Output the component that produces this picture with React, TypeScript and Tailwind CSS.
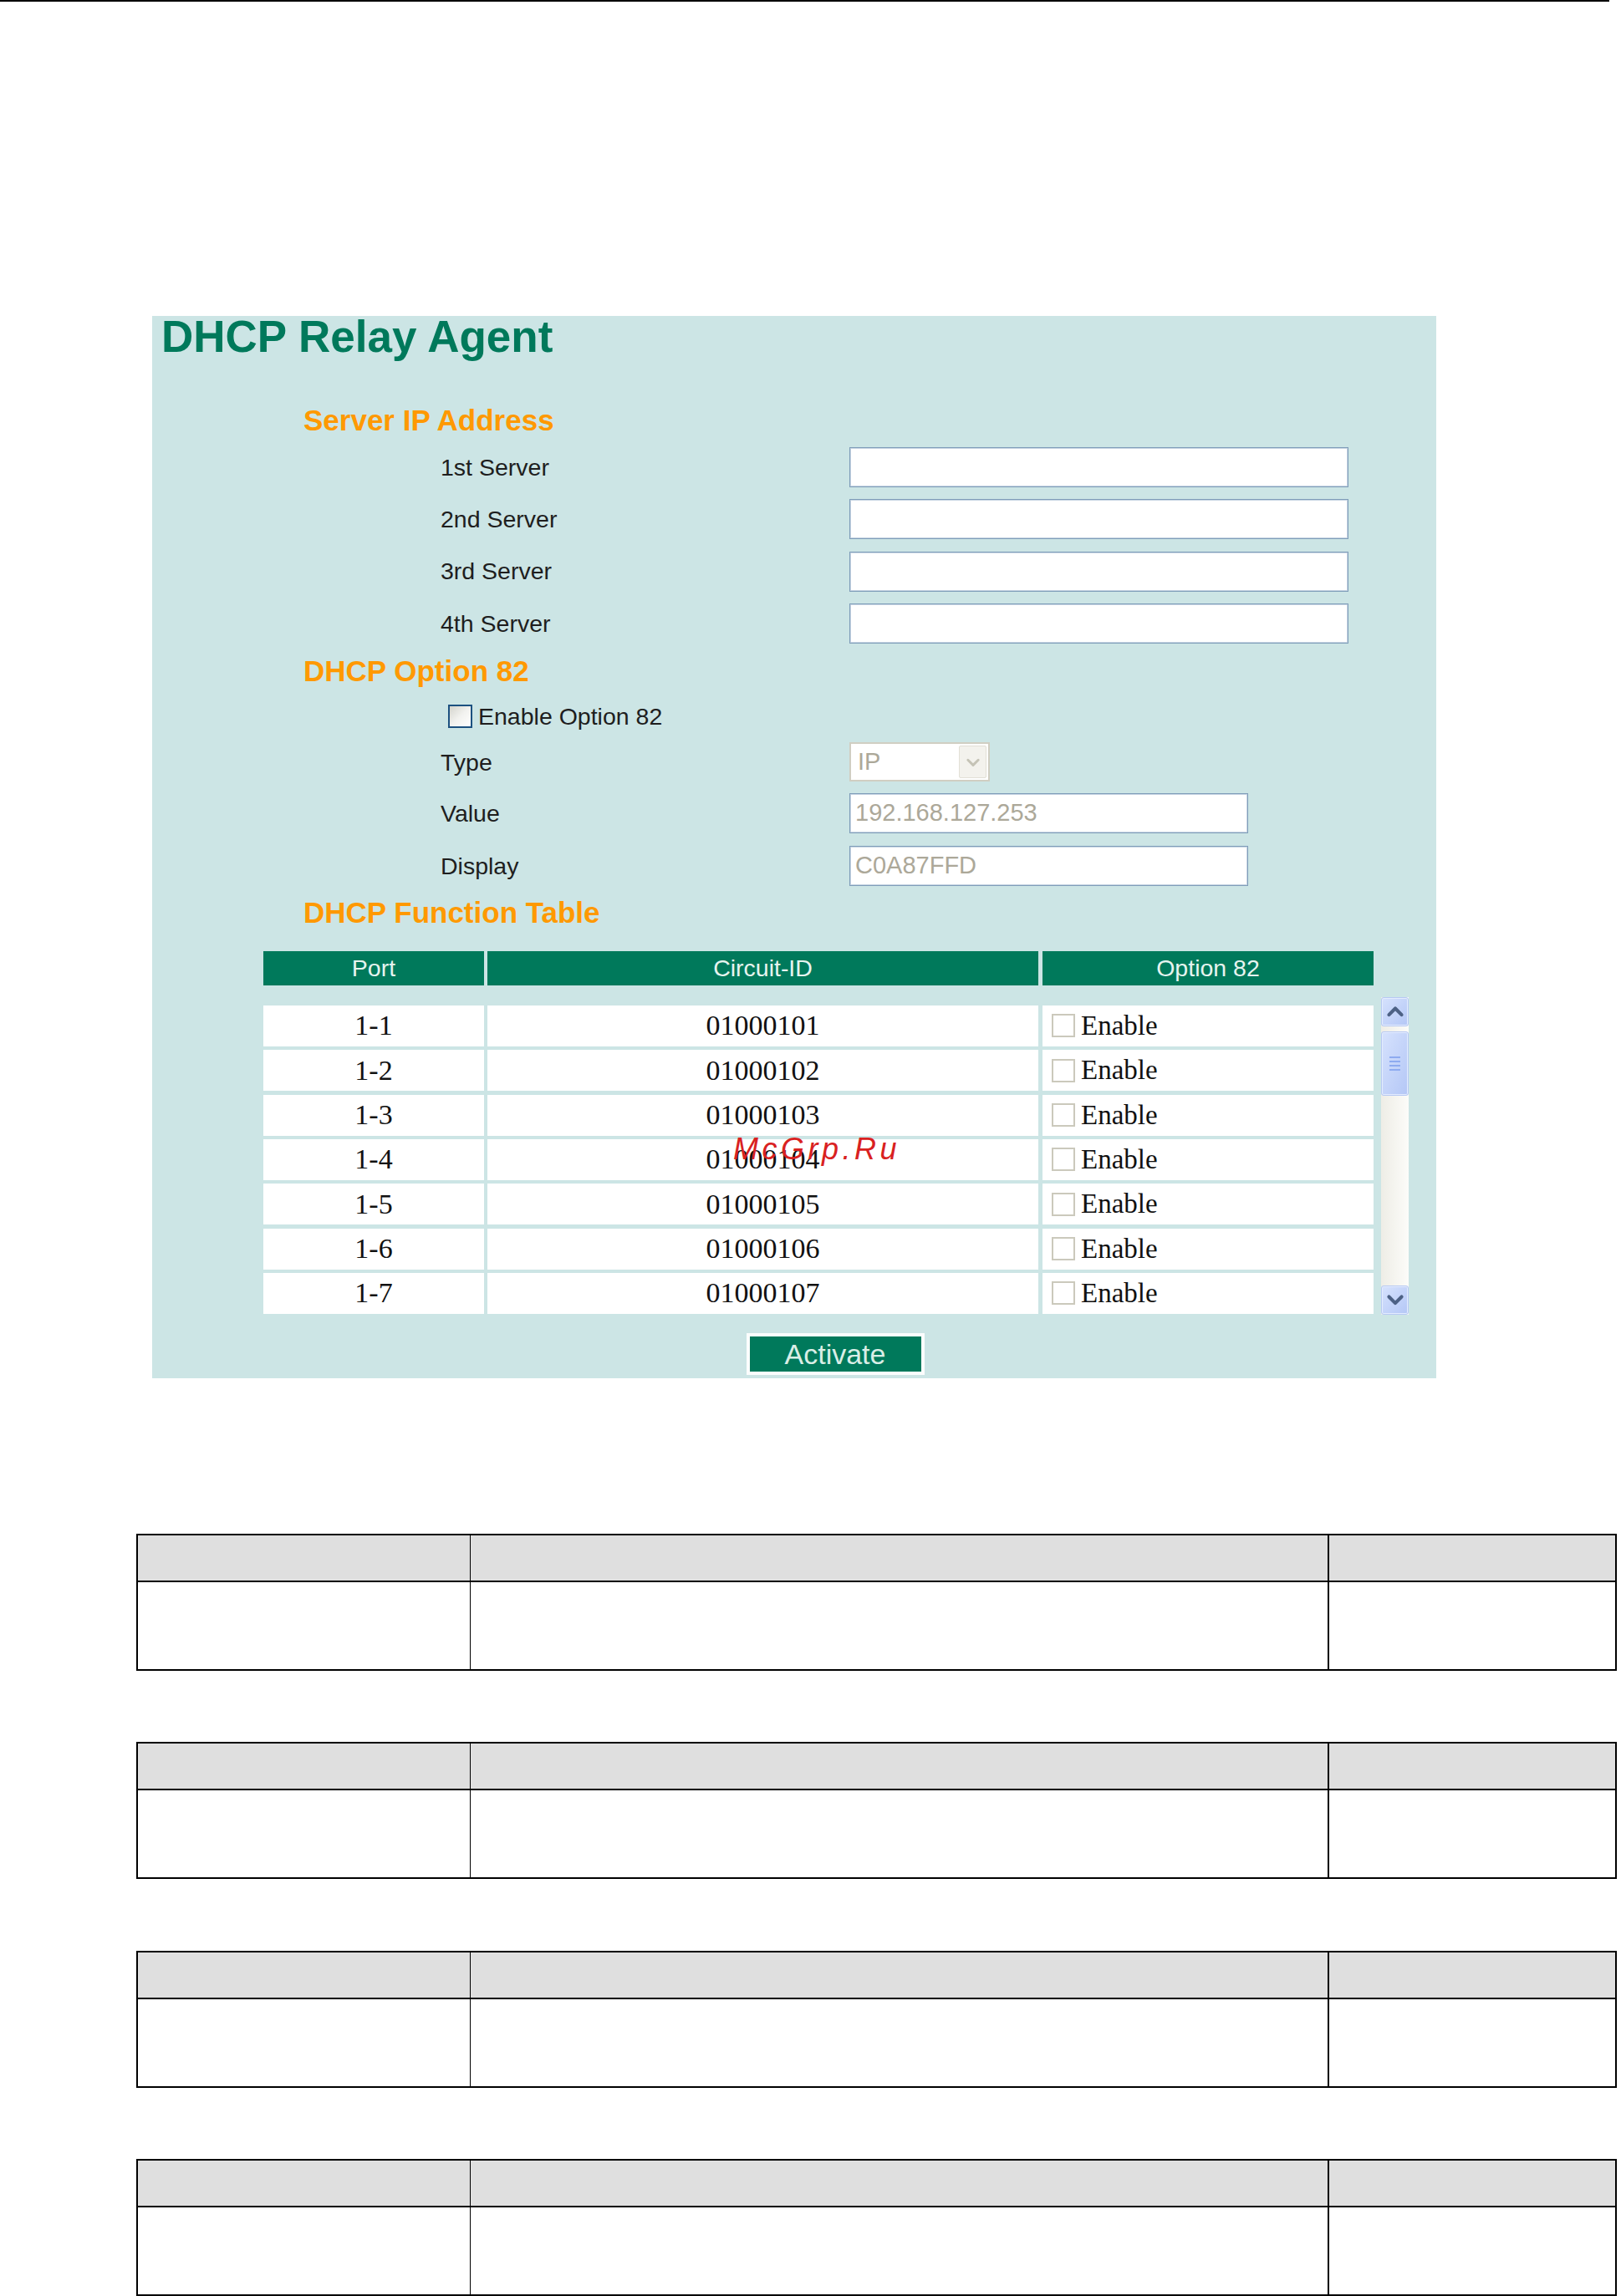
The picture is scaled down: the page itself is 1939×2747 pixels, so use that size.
import React from "react";

const SANS = "font-['Liberation_Sans',Arial,sans-serif]";
const SERIF = "font-['Liberation_Serif','Times_New_Roman',serif]";

function Heading({ children, mt }: { children: React.ReactNode; mt: string }) {
  return (
    <div className={`${mt} flex h-[40px] items-center pl-[181px] text-[35px] font-bold leading-none text-[#ff9900]`}>
      {children}
    </div>
  );
}

function Field({ label, mt, children }: { label: string; mt: string; children: React.ReactNode }) {
  return (
    <div className={`${mt} flex h-[48px] items-center pl-[345px]`}>
      <div className="w-[489px] text-[28.5px] leading-none text-[#1e1e1e]">{label}</div>
      {children}
    </div>
  );
}

function TextBox({ w, value }: { w: string; value?: string }) {
  return (
    <div
      className={`${w} flex h-[48px] items-center border border-[#7f9db9] bg-white pl-[6px] text-[29px] leading-none text-[#aca899] shadow-[inset_0_0_0_1px_#c6d4e2]`}
    >
      {value}
    </div>
  );
}

function Chevron({ up, color, size, sw }: { up?: boolean; color: string; size: number; sw: number }) {
  return (
    <svg width={size} height={size} viewBox="0 0 16 16" fill="none">
      <path
        d={up ? "M2.5 11 L8 5.5 L13.5 11" : "M2.5 5.5 L8 11 L13.5 5.5"}
        stroke={color}
        strokeWidth={sw}
        strokeLinecap="round"
        strokeLinejoin="round"
      />
    </svg>
  );
}

function ScrollBtn({ up }: { up?: boolean }) {
  return (
    <div className="flex h-[35px] w-[33px] items-center justify-center rounded-[3px] border border-[#b7c9f3] bg-linear-to-br from-[#d6e2fd] to-[#b4c7f6] shadow-[inset_0_0_0_1px_#e4ecfe]">
      <Chevron up={up} color="#4d6185" size={22} sw={3} />
    </div>
  );
}

const circuit = ["01000101", "01000102", "01000103", "01000104", "01000105", "01000106", "01000107"];

function InfoTable({ mt }: { mt: string }) {
  return (
    <div className={`${mt} flex w-[1771px] border-2 border-black`}>
      <div className="w-[398px] border-r border-black">
        <div className="h-[56px] border-b-2 border-black bg-[#dfdfdf]" />
        <div className="h-[104px] bg-white" />
      </div>
      <div className="w-[1027px] border-r-2 border-black">
        <div className="h-[56px] border-b-2 border-black bg-[#dfdfdf]" />
        <div className="h-[104px] bg-white" />
      </div>
      <div className="flex-1">
        <div className="h-[56px] border-b-2 border-black bg-[#dfdfdf]" />
        <div className="h-[104px] bg-white" />
      </div>
    </div>
  );
}

export default function App() {
  return (
    <div className={`${SANS} relative h-[2747px] w-[1939px] overflow-hidden bg-white`}>
      <div className="h-[2px] w-[1925px] bg-black" />

      <div className="ml-[182px] mt-[376px] flex h-[1271px] w-[1536px] flex-col bg-[#cce5e5]">
        <div className="flex h-[48px] items-center pl-[11px] text-[53px] font-bold leading-none text-[#00795b]">
          DHCP Relay Agent
        </div>

        <Heading mt="mt-[56px]">Server IP Address</Heading>

        <Field label="1st Server" mt="mt-[13px]">
          <TextBox w="w-[597px]" />
        </Field>
        <Field label="2nd Server" mt="mt-[14.33px]">
          <TextBox w="w-[597px]" />
        </Field>
        <Field label="3rd Server" mt="mt-[14.33px]">
          <TextBox w="w-[597px]" />
        </Field>
        <Field label="4th Server" mt="mt-[14.33px]">
          <TextBox w="w-[597px]" />
        </Field>

        <Heading mt="mt-[12.5px]">DHCP Option 82</Heading>

        <div className="mt-[20.5px] flex h-[28px] items-center pl-[354px]">
          <div className="h-[28px] w-[29px] border-2 border-[#1c5180] bg-linear-to-br from-[#d4d4cd] via-[#f2f2ef] to-white" />
          <div className="ml-[7px] text-[28.5px] leading-none text-[#1e1e1e]">Enable Option 82</div>
        </div>

        <Field label="Type" mt="mt-[17px]">
          <div className="flex h-[47px] w-[168px] items-stretch border-2 border-[#d0cec2] bg-white p-[2px]">
            <div className="flex flex-1 items-center pl-[6px] text-[29px] leading-none text-[#aca899]">IP</div>
            <div className="flex w-[33px] items-center justify-center rounded-[2px] border border-[#e2e0d6] bg-[#f3f2ed]">
              <Chevron color="#c5c3b6" size={18} sw={2.6} />
            </div>
          </div>
        </Field>
        <Field label="Value" mt="mt-[13px]">
          <TextBox w="w-[477px]" value="192.168.127.253" />
        </Field>
        <Field label="Display" mt="mt-[15px]">
          <TextBox w="w-[477px]" value="C0A87FFD" />
        </Field>

        <Heading mt="mt-[11.5px]">DHCP Function Table</Heading>

        <div className="ml-[133px] mt-[26.5px] flex h-[41px] text-[28.5px] leading-none text-[#e6f4ef]">
          <div className="flex w-[264px] items-center justify-center bg-[#00795b]">Port</div>
          <div className="ml-[4px] flex w-[659px] items-center justify-center bg-[#00795b]">Circuit-ID</div>
          <div className="ml-[5px] flex w-[396px] items-center justify-center bg-[#00795b]">Option 82</div>
        </div>

        <div className="ml-[133px] mt-[14px] flex h-[380px]">
          <div className="flex w-[1328px] flex-col gap-[4.33px] pt-[10px]">
            {circuit.map((c, i) => (
              <div key={c} className={`${SERIF} flex h-[49px] text-[34px] leading-none text-[#111]`}>
                <div className="flex w-[264px] items-center justify-center bg-white">1-{i + 1}</div>
                <div className="ml-[4px] flex w-[659px] items-center justify-center bg-white">{c}</div>
                <div className="ml-[5px] flex w-[396px] items-center bg-white pl-[11px]">
                  <div className="h-[28px] w-[28px] border-2 border-[#cbc9bc] bg-white" />
                  <div className="ml-[7px] text-[33px]">Enable</div>
                </div>
              </div>
            ))}
          </div>
          <div className="ml-[9px] flex h-[380px] w-[33px] flex-col bg-linear-to-r from-[#eeede6] to-[#fcfcf9]">
            <ScrollBtn up />
            <div className="mt-[6px] flex h-[77px] w-[33px] flex-col items-center justify-center gap-[3px] rounded-[3px] border border-[#b7c9f3] bg-linear-to-br from-[#d6e2fd] to-[#b4c7f6] shadow-[inset_0_0_0_1px_#e4ecfe]">
              <div className="h-[2px] w-[13px] bg-[#8eabf0]" />
              <div className="h-[2px] w-[13px] bg-[#8eabf0]" />
              <div className="h-[2px] w-[13px] bg-[#8eabf0]" />
              <div className="h-[2px] w-[13px] bg-[#8eabf0]" />
            </div>
            <div className="mt-auto">
              <ScrollBtn />
            </div>
          </div>
        </div>

        <div className="ml-[133px] mt-[22px] flex w-[1368px] justify-center">
          <div className="flex h-[50px] w-[213px] items-center justify-center border-4 border-[#fbfdfd] bg-[#00795b] text-[34px] leading-none text-[#d9eee6]">
            Activate
          </div>
        </div>
      </div>

      <div className="ml-[163px] mt-[186px] flex flex-col">
        <InfoTable mt="mt-0" />
        <InfoTable mt="mt-[85.33px]" />
        <InfoTable mt="mt-[85.33px]" />
        <InfoTable mt="mt-[85.33px]" />
      </div>

      <div className="absolute left-[877px] top-[1357px] text-[36px] italic leading-none tracking-[4.5px] text-[#d92121]">
        McGrp.Ru
      </div>
    </div>
  );
}
